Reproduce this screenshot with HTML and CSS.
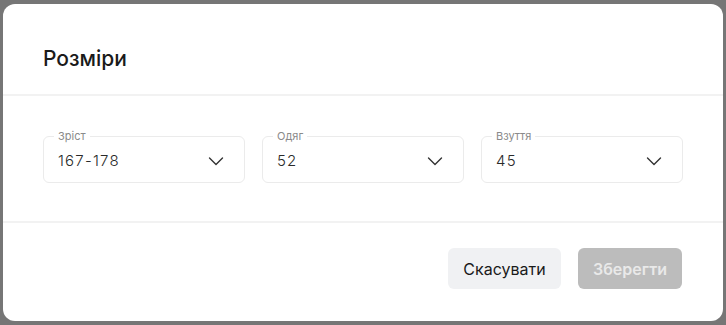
FILE: index.html
```html
<!DOCTYPE html>
<html lang="uk">
<head>
  <meta charset="UTF-8">
  <meta name="viewport" content="width=device-width, initial-scale=1.0">
  <title>Розміри</title>
  <link rel="stylesheet" href="styles.css">
</head>
<body>
<div class="overlay">
  <div class="modal">
    <div class="modal-header">
      <h2>Розміри</h2>
    </div>

    <div class="modal-body">
      <div class="field">
        <span class="field-label">Зріст</span>
        <span class="field-value">167-178</span>
        <svg class="chevron" width="16" height="16" viewBox="0 0 16 16"><path d="M1.5 5 8 11.5 14.5 5" fill="none" stroke="#333" stroke-width="1.4" stroke-linecap="round" stroke-linejoin="round"/></svg>
      </div>
      <div class="field">
        <span class="field-label">Одяг</span>
        <span class="field-value">52</span>
        <svg class="chevron" width="16" height="16" viewBox="0 0 16 16"><path d="M1.5 5 8 11.5 14.5 5" fill="none" stroke="#333" stroke-width="1.4" stroke-linecap="round" stroke-linejoin="round"/></svg>
      </div>
      <div class="field">
        <span class="field-label">Взуття</span>
        <span class="field-value">45</span>
        <svg class="chevron" width="16" height="16" viewBox="0 0 16 16"><path d="M1.5 5 8 11.5 14.5 5" fill="none" stroke="#333" stroke-width="1.4" stroke-linecap="round" stroke-linejoin="round"/></svg>
      </div>
    </div>

    <div class="modal-footer">
      <button class="btn btn-cancel">Скасувати</button>
      <button class="btn btn-save" disabled>Зберегти</button>
    </div>
  </div>
</div>
</body>
</html>
```

FILE: styles.css
```css
html, body {
  margin: 0;
  padding: 0;
}

body {
  font-family: Inter, "Noto Sans", sans-serif;
  background: #767676;
  width: 726px;
  height: 325px;
  overflow: hidden;
}

.overlay {
  padding: 4px 3px 0 3px;
}

.modal {
  background: #fff;
  border-radius: 12px;
  height: 317px;
  display: flex;
  flex-direction: column;
}

.modal-header {
  height: 90px;
  padding: 0 40px;
  display: flex;
  align-items: center;
  border-bottom: 2px solid #f2f2f2;
}

.modal-header h2 {
  margin: 18px 0 0 0;
  font-size: 21px;
  font-weight: 500;
  color: #1a1a1a;
}

.modal-body {
  padding: 40px 40px 38px;
  display: grid;
  grid-template-columns: repeat(3, 1fr);
  gap: 17px;
  border-bottom: 2px solid #f2f2f2;
}

.field {
  position: relative;
  height: 45px;
  border: 1px solid #ebebeb;
  border-radius: 6px;
  display: flex;
  align-items: center;
  padding: 0 20px 0 14px;
}

.field-label {
  position: absolute;
  top: -7px;
  left: 10px;
  padding: 0 4px;
  background: #fff;
  font-size: 11px;
  line-height: 12px;
  color: #8a8a8a;
}

.field-value {
  flex: 1;
  font-size: 15px;
  font-weight: 300;
  color: #2a2a2a;
  letter-spacing: 1.2px;
  margin-top: 2px;
}

.chevron {
  margin-top: 3px;
}

.modal-footer {
  flex: 1;
  display: flex;
  justify-content: flex-end;
  align-items: flex-start;
  gap: 17px;
  padding: 25px 41px 0;
}

.btn {
  height: 41px;
  border: none;
  border-radius: 6px;
  font-family: inherit;
  font-size: 16px;
  padding: 0;
}

.btn-cancel {
  background: #f0f1f3;
  color: #1a1a1a;
  width: 113px;
}

.btn-save {
  background: #bcbcbc;
  color: #e9e9e9;
  font-weight: 600;
  width: 104px;
}
```
